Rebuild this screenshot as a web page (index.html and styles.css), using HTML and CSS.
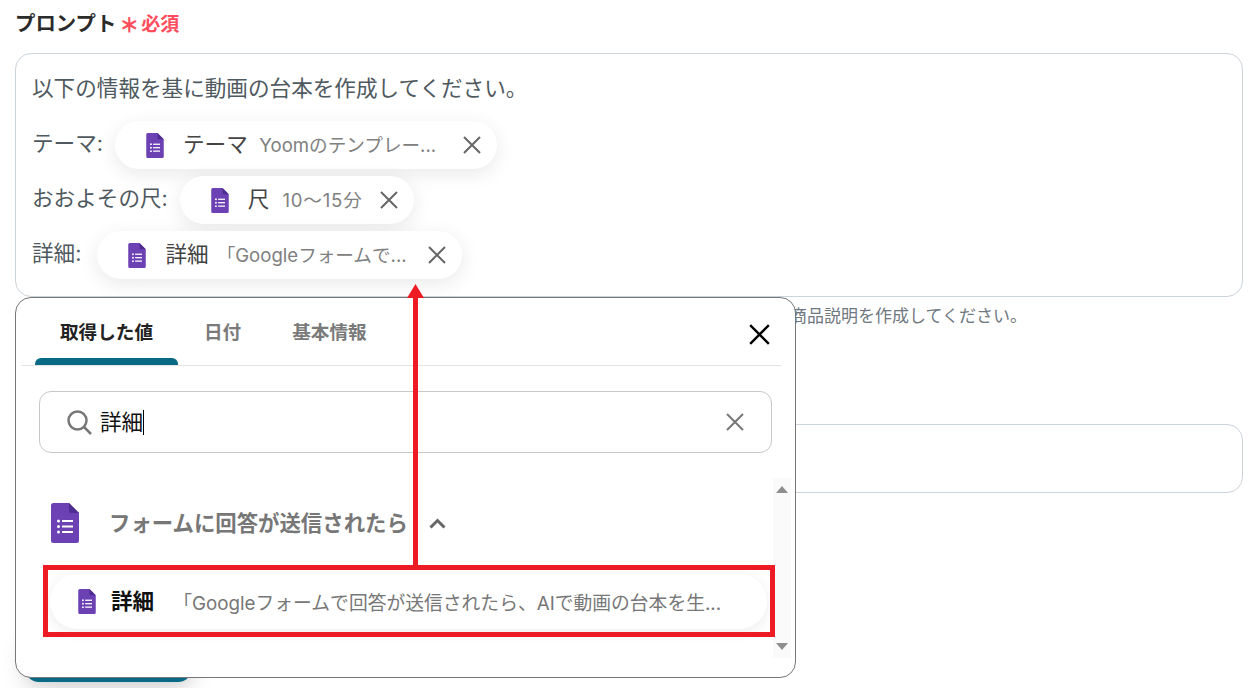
FILE: index.html
```html
<!DOCTYPE html>
<html lang="ja">
<head>
<meta charset="utf-8">
<title>プロンプト</title>
<link rel="stylesheet" href="styles.css">
</head>
<body>
<svg class="defs" width="0" height="0" aria-hidden="true">
  <symbol id="form" viewBox="0 0 28 40">
    <path d="M2.500 0H18l10 10v27.500a2.500 2.500 0 0 1-2.500 2.500h-23A2.500 2.500 0 0 1 0 37.500V2.500A2.500 2.500 0 0 1 2.500 0z" fill="#6b41b4"/>
    <path d="M18 0l10 10h-8a2 2 0 0 1-2-2z" fill="#4f2c92"/>
    <g fill="#fff"><circle cx="7.500" cy="18" r="1.500"/><circle cx="7.500" cy="23.500" r="1.500"/><circle cx="7.500" cy="29" r="1.500"/><rect x="11" y="17" width="11" height="2"/><rect x="11" y="22.500" width="11" height="2"/><rect x="11" y="28" width="11" height="2"/></g>
  </symbol>
  <symbol id="cross" viewBox="0 0 18 18">
    <path d="M1 1l16 16M17 1L1 17" fill="none" stroke="currentColor" stroke-width="2"/>
  </symbol>
</svg>

<main class="page">
  <div class="field-label"><span class="label-text">プロンプト</span><span class="asterisk">＊</span><span class="required">必須</span></div>
  <div class="prompt-box">
    <p class="prompt-line">以下の情報を基に動画の台本を作成してください。</p>
    <div class="prompt-row"><span class="row-label">テーマ:</span>
      <div class="chip"><svg class="chip-icon"><use href="#form"/></svg><span class="chip-title">テーマ</span><span class="chip-value chip-value-theme">Yoomのテンプレー...</span><svg class="chip-x"><use href="#cross"/></svg></div>
    </div>
    <div class="prompt-row"><span class="row-label">おおよその尺:</span>
      <div class="chip"><svg class="chip-icon"><use href="#form"/></svg><span class="chip-title">尺</span><span class="chip-value chip-value-num">10～15分</span><svg class="chip-x"><use href="#cross"/></svg></div>
    </div>
    <div class="prompt-row"><span class="row-label row-label-short">詳細:</span>
      <div class="chip"><svg class="chip-icon"><use href="#form"/></svg><span class="chip-title">詳細</span><span class="chip-value chip-value-quote">「Googleフォームで...</span><svg class="chip-x"><use href="#cross"/></svg></div>
    </div>
  </div>
  <p class="hint">商品説明を作成してください。</p>
  <div class="second-box"></div>
  <div class="teal-button"></div>
</main>

<section class="popup">
  <header class="popup-head">
    <div class="tabs">
      <div class="tab tab-active"><span class="tab-name">取得した値</span><span class="tab-bar"></span></div>
      <div class="tab"><span class="tab-name">日付</span><span class="tab-bar tab-bar-off"></span></div>
      <div class="tab"><span class="tab-name">基本情報</span><span class="tab-bar tab-bar-off"></span></div>
    </div>
    <svg class="popup-close"><use href="#cross"/></svg>
  </header>
  <div class="search">
    <svg class="search-icon" viewBox="0 0 25 25"><circle cx="10.500" cy="10.500" r="9" fill="none" stroke="#777" stroke-width="2.500"/><path d="M17 17l7 7" stroke="#777" stroke-width="2.500" fill="none"/></svg>
    <span class="search-text">詳細</span>
    <svg class="search-x"><use href="#cross"/></svg>
  </div>
  <div class="list-area">
    <div class="list">
      <div class="group"><svg class="group-icon"><use href="#form"/></svg><span class="group-title">フォームに回答が送信されたら</span>
        <svg class="chevron" viewBox="0 0 17 11"><path d="M1.500 9.500l7-7 7 7" fill="none" stroke="#666" stroke-width="3"/></svg></div>
      <div class="item"><svg class="chip-icon"><use href="#form"/></svg><span class="item-title">詳細</span><span class="item-value">「Googleフォームで回答が送信されたら、AIで動画の台本を生...</span></div>
    </div>
    <div class="scrollbar"><span class="arrow-up"></span><span class="arrow-down"></span></div>
  </div>
</section>

<div class="mark-box"></div>
<svg class="mark-arrow" viewBox="0 0 17 281"><path d="M8.500 0L17 14H11V281H6V14H0z" fill="#ed1c24"/></svg>
</body>
</html>
```
FILE: styles.css
```css
* { box-sizing: border-box; }
html, body { margin: 0; height: 688px; overflow: hidden; background: #fff; }
body { position: relative; font-family: Inter, "Noto Sans CJK JP", sans-serif; color: #4f5960; }
.defs { position: absolute; }
.page { padding: 0 12px 0 15px; }

.field-label { height: 53px; padding-top: 9px; display: flex; align-items: baseline; line-height: 30px; }
.label-text { font-size: 20.400px; font-weight: 700; color: #2b2b2b; }
.asterisk { font-size: 20px; font-weight: 900; color: #ff4d5e; margin-left: 3px; transform: translateY(2px); }
.required { font-size: 19px; font-weight: 700; color: #ff4d5e; margin-left: 2px; }

.prompt-box { height: 244px; border: 1px solid #cdd3da; border-radius: 16px; padding: 19px 16px 0; display: flex; flex-direction: column; gap: 7px; }
.prompt-line { margin: 0 0 11px; font-size: 21.600px; line-height: 30px; }
.prompt-row { display: flex; align-items: center; gap: 12px; height: 48px; font-size: 21.600px; }
.row-label { white-space: nowrap; margin-bottom: 8px; }
.row-label-short { margin-right: 4px; }

.chip { display: flex; align-items: center; height: 48px; padding: 0 16px 0 31px; background: #fff; border-radius: 24px; box-shadow: 0 5px 20px rgba(0,0,0,.09); }
.chip-icon { flex: none; width: 18px; height: 25px; }
.chip-title { margin: 0 0 6px 19px; font-size: 21.600px; color: #444; white-space: nowrap; }
.chip-value { margin: 0 0 3px 13px; white-space: nowrap; font-size: 18.600px; color: #808080; }
.chip-value-theme { margin-left: 11.500px; width: 187px; }
.chip-value-num { letter-spacing: .8px; }
.chip-value-quote { margin-left: 8px; width: 194px; }
.chip-x { flex: none; margin-left: 17px; width: 18px; height: 18px; color: #666; }

.hint { margin: 7px 0 0 775px; height: 24px; font-size: 17px; line-height: 24px; color: #6f7880; white-space: nowrap; }
.second-box { margin-top: 96px; height: 69px; border: 1px solid #cdd3da; border-radius: 16px; }
.teal-button { margin: 147px 0 0 10px; width: 167px; height: 42px; background: #086a85; border-radius: 0 0 14px 14px; box-shadow: 0 4px 22px rgba(0,0,0,.22); }

.popup { position: absolute; left: 15px; top: 297px; width: 781px; height: 381px; background: #fff; border: 1px solid #777; border-radius: 16px; display: flex; flex-direction: column; }
.popup-head { margin: 0 14px 0 5px; height: 68px; flex: none; padding-left: 14px; border-bottom: 1px solid #e3e3e3; display: flex; justify-content: space-between; align-items: flex-start; }
.tabs { display: flex; gap: 1px; height: 67px; }
.tab { display: flex; flex-direction: column; }
.tab-name { height: 60px; padding: 9px 25px 0; line-height: 51px; font-size: 18.600px; font-weight: 700; color: #7a7a7a; white-space: nowrap; }
.tab-active .tab-name { color: #222; }
.tab-bar { height: 7px; background: #086a85; border-radius: 6px 6px 0 0; }
.tab-bar-off { background: transparent; }
.popup-close { width: 21px; height: 21px; margin: 26px 11px 0 0; color: #000; }

.search { margin: 25px 23px 0; height: 62px; flex: none; border: 1px solid #c8c8c8; border-radius: 12px; display: flex; align-items: center; padding-left: 27px; }
.search-icon { width: 25px; height: 25px; flex: none; }
.search-text { margin-left: 8px; font-size: 21.600px; line-height: 25px; color: #111; border-right: 1px solid #000; }
.search-x { margin-left: auto; margin-right: 27px; width: 18px; height: 18px; color: #777; }

.list-area { margin-top: 25px; height: 180px; flex: none; display: flex; }
.list { flex: 1; min-width: 0; padding-top: 25px; }
.group { display: flex; align-items: center; height: 40px; padding-left: 35px; }
.group-icon { width: 28px; height: 40px; flex: none; }
.group-title { margin: 0 0 4px 30px; font-size: 21.400px; font-weight: 700; color: #777; white-space: nowrap; }
.chevron { margin-left: 21px; width: 17px; height: 11px; flex: none; }
.item { margin: 31px 6px 0 34px; height: 55px; border-radius: 28px; background: #fff; box-shadow: 0 3px 14px rgba(0,0,0,.08); display: flex; align-items: center; padding: 0 28px; }
.item-title { margin: 0 0 4px 15px; font-size: 21.600px; font-weight: 700; color: #111; white-space: nowrap; }
.item-value { margin-left: 19px; white-space: nowrap; font-size: 18.800px; color: #777; }

.scrollbar { flex: none; width: 18px; margin-right: 4px; background: #fafafa; display: flex; flex-direction: column; justify-content: space-between; align-items: center; padding: 8px 0; }
.arrow-up { border: 6.500px solid transparent; border-top: 0; border-bottom: 7px solid #8e8e8e; }
.arrow-down { border: 6.500px solid transparent; border-bottom: 0; border-top: 7px solid #8e8e8e; }

.mark-box { position: absolute; left: 43px; top: 565px; width: 732px; height: 72px; border: 5px solid #ed1c24; }
.mark-arrow { position: absolute; left: 407px; top: 284px; width: 17px; height: 281px; }
```
